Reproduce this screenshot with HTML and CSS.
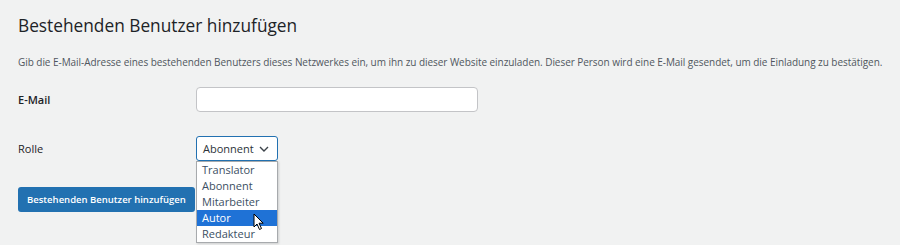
FILE: index.html
```html
<!DOCTYPE html>
<html lang="de">
<head>
    <meta charset="UTF-8">
    <title>Bestehenden Benutzer hinzufügen</title>
    <link rel="stylesheet" href="styles.css">
</head>
<body>
    <div class="wrap">
        <h2 class="page-title">Bestehenden Benutzer hinzufügen</h2>
        <p class="description">Gib die E-Mail-Adresse eines bestehenden Benutzers dieses Netzwerkes ein, um ihn zu dieser Website einzuladen. Dieser Person wird eine E-Mail gesendet, um die Einladung zu bestätigen.</p>

        <!-- Form rows -->
        <div class="form-table">
            <div class="form-row">
                <label class="form-label" for="email">E-Mail</label>
                <input type="text" id="email" class="text-input">
            </div>
            <div class="form-row role-row">
                <label class="form-label">Rolle</label>
                <div class="select-wrap">
                    <div class="select-box">
                        <span>Abonnent</span>
                        <svg class="chevron" width="10" height="6" viewBox="0 0 10 6"><path d="M1 1l4 4 4-4" fill="none" stroke="#3c434a" stroke-width="1.4"/></svg>
                    </div>
                    <ul class="select-list">
                        <li>Translator</li>
                        <li>Abonnent</li>
                        <li>Mitarbeiter</li>
                        <li class="selected">Autor</li>
                        <li>Redakteur</li>
                    </ul>
                    <svg class="cursor" width="12" height="18" viewBox="0 0 12 18">
                        <path d="M1 1v13l3-3 2.5 5.5 2-1-2.5-5.3h4.2z" fill="#fff" stroke="#000" stroke-width="1"/>
                    </svg>
                </div>
            </div>
        </div>

        <button class="button-primary">Bestehenden Benutzer hinzufügen</button>
    </div>
</body>
</html>
```

FILE: styles.css
```css
/* Global Styles */
* {
    box-sizing: border-box;
    font-family: 'Open Sans', 'Noto Sans', sans-serif;
}

body {
    margin: 0;
    background: #f1f2f2;
    color: #1d2327;
}

.wrap {
    padding: 12px 0 0 18px;
    height: 245px;
}

.page-title {
    margin: 0;
    font-size: 17.3px;
    font-weight: 400;
    line-height: 28px;
    color: #1d2327;
}

.description {
    margin: 14px 0 0;
    font-size: 10px;
    line-height: 16px;
    letter-spacing: -0.05px;
    color: #50575e;
    white-space: nowrap;
}

/* Form rows */
.form-table {
    margin-top: 17px;
}

.form-row {
    display: flex;
    align-items: center;
    height: 25px;
}

.role-row {
    margin-top: 24px;
}

.form-label {
    width: 178px;
    font-size: 11px;
    font-weight: 600;
    color: #1d2327;
}

.role-row .form-label {
    font-weight: 500;
}

.text-input {
    width: 282px;
    height: 25px;
    border: 1px solid #c3c4c7;
    border-radius: 4px;
    background: #fff;
}

/* Select with open list */
.select-wrap {
    position: relative;
}

.select-box {
    display: flex;
    align-items: center;
    justify-content: space-between;
    width: 82px;
    height: 25px;
    padding: 0 8px 0 6px;
    border: 1px solid #2271b1;
    border-radius: 3px;
    background: #fff;
    font-size: 11px;
    color: #2c3338;
}

.select-list {
    position: absolute;
    top: 25px;
    left: 0;
    width: 82px;
    margin: 0;
    padding: 0;
    list-style: none;
    background: #fff;
    border: 1px solid #a7aaad;
    box-shadow: 1px 1px 2px rgba(0,0,0,0.15);
    z-index: 2;
}

.select-list li {
    height: 16px;
    padding-left: 5px;
    font-size: 11px;
    line-height: 16px;
    color: #3c4f63;
}

.select-list li.selected {
    background: #1f72d6;
    color: #fff;
}

.cursor {
    position: absolute;
    left: 57px;
    top: 77px;
    z-index: 3;
}

/* Button */
.button-primary {
    margin-top: 26px;
    height: 25px;
    padding: 0 9px;
    border: none;
    border-radius: 3px;
    background: #2271b1;
    color: #fff;
    font-size: 9.5px;
    font-weight: 600;
}
```
